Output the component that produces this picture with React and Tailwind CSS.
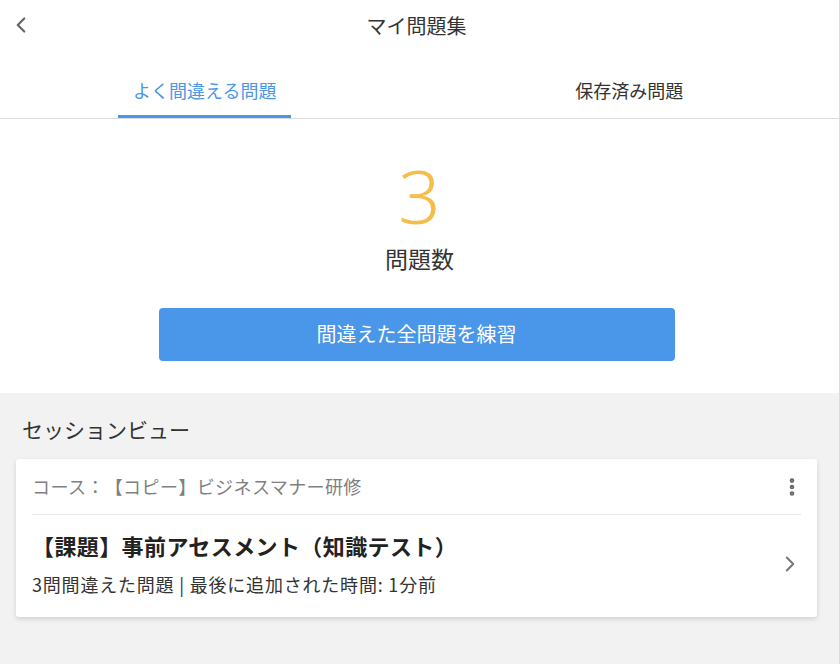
import { ChevronLeft, ChevronRight, MoreVertical } from 'lucide-react';

const font = { fontFamily: '"Noto Sans CJK JP", "Noto Sans", sans-serif' };

export default function App() {
  return (
    <div className="w-[840px] h-[664px] bg-[#f2f2f2] overflow-hidden border-r border-[#dcdcdc] [text-spacing-trim:space-all]" style={font}>
      {/* ヘッダー */}
      <div className="bg-white">
        <div className="h-[54px] flex items-center relative">
          <button className="absolute left-[8px] top-[12px] text-[#666]">
            <ChevronLeft size={26} strokeWidth={2} />
          </button>
          <h1 className="w-full text-center text-[20px] text-[#333] pb-[2px] pr-[6px]">マイ問題集</h1>
        </div>
        <div className="flex border-b border-[#dcdcdc] h-[65px]">
          <div className="w-1/2 flex justify-center">
            <div className="w-[173px] flex flex-col items-center justify-end border-b-[3px] border-[#4a96e8] pb-[11px] mr-[10px]">
              <span className="text-[18px] text-[#4a96e8]">よく間違える問題</span>
            </div>
          </div>
          <div className="w-1/2 flex justify-center items-end pb-[14px]">
            <span className="text-[18px] text-[#333]">保存済み問題</span>
          </div>
        </div>
      </div>

      {/* 問題数 */}
      <div className="bg-white flex flex-col items-center pt-[32px] pb-[32px]">
        <p className="text-[74px] leading-[90px] text-[#f6bd4a] font-light" style={{ fontFamily: '"Noto Sans", sans-serif' }}>3</p>
        <p className="text-[23px] text-[#333]">問題数</p>
        <button className="mt-[32px] w-[516px] h-[53px] rounded-[4px] bg-[#4a96e8] text-white text-[20px] mr-[6px]">
          間違えた全問題を練習
        </button>
      </div>

      {/* セッションビュー */}
      <div className="px-[16px] pt-[21px]">
        <h2 className="text-[21px] text-[#333] px-[6px]">セッションビュー</h2>
        <div className="mt-[14px] bg-white rounded-[3px] shadow-[0_2px_5px_rgba(0,0,0,0.14)] w-[801px] px-[16px]">
          <div className="flex items-center justify-between h-[56px] border-b border-[#e6e6e6]">
            <span className="text-[18px] text-[#808080] tracking-[0.4px]">コース：【コピー】ビジネスマナー研修</span>
            <MoreVertical size={22} className="text-[#666] -mr-[2px]" strokeWidth={3} />
          </div>
          <div className="flex items-center justify-between pt-[14px] pb-[19px]">
            <div>
              <p className="text-[22px] font-bold text-[#222] tracking-[0.4px]">【課題】事前アセスメント（知識テスト）</p>
              <p className="text-[18px] text-[#333] mt-[9px] tracking-[0.8px]">3問間違えた問題 | 最後に追加された時間: 1分前</p>
            </div>
            <ChevronRight size={26} className="text-[#777] -mr-[2px]" strokeWidth={1.8} />
          </div>
        </div>
      </div>
    </div>
  );
}
